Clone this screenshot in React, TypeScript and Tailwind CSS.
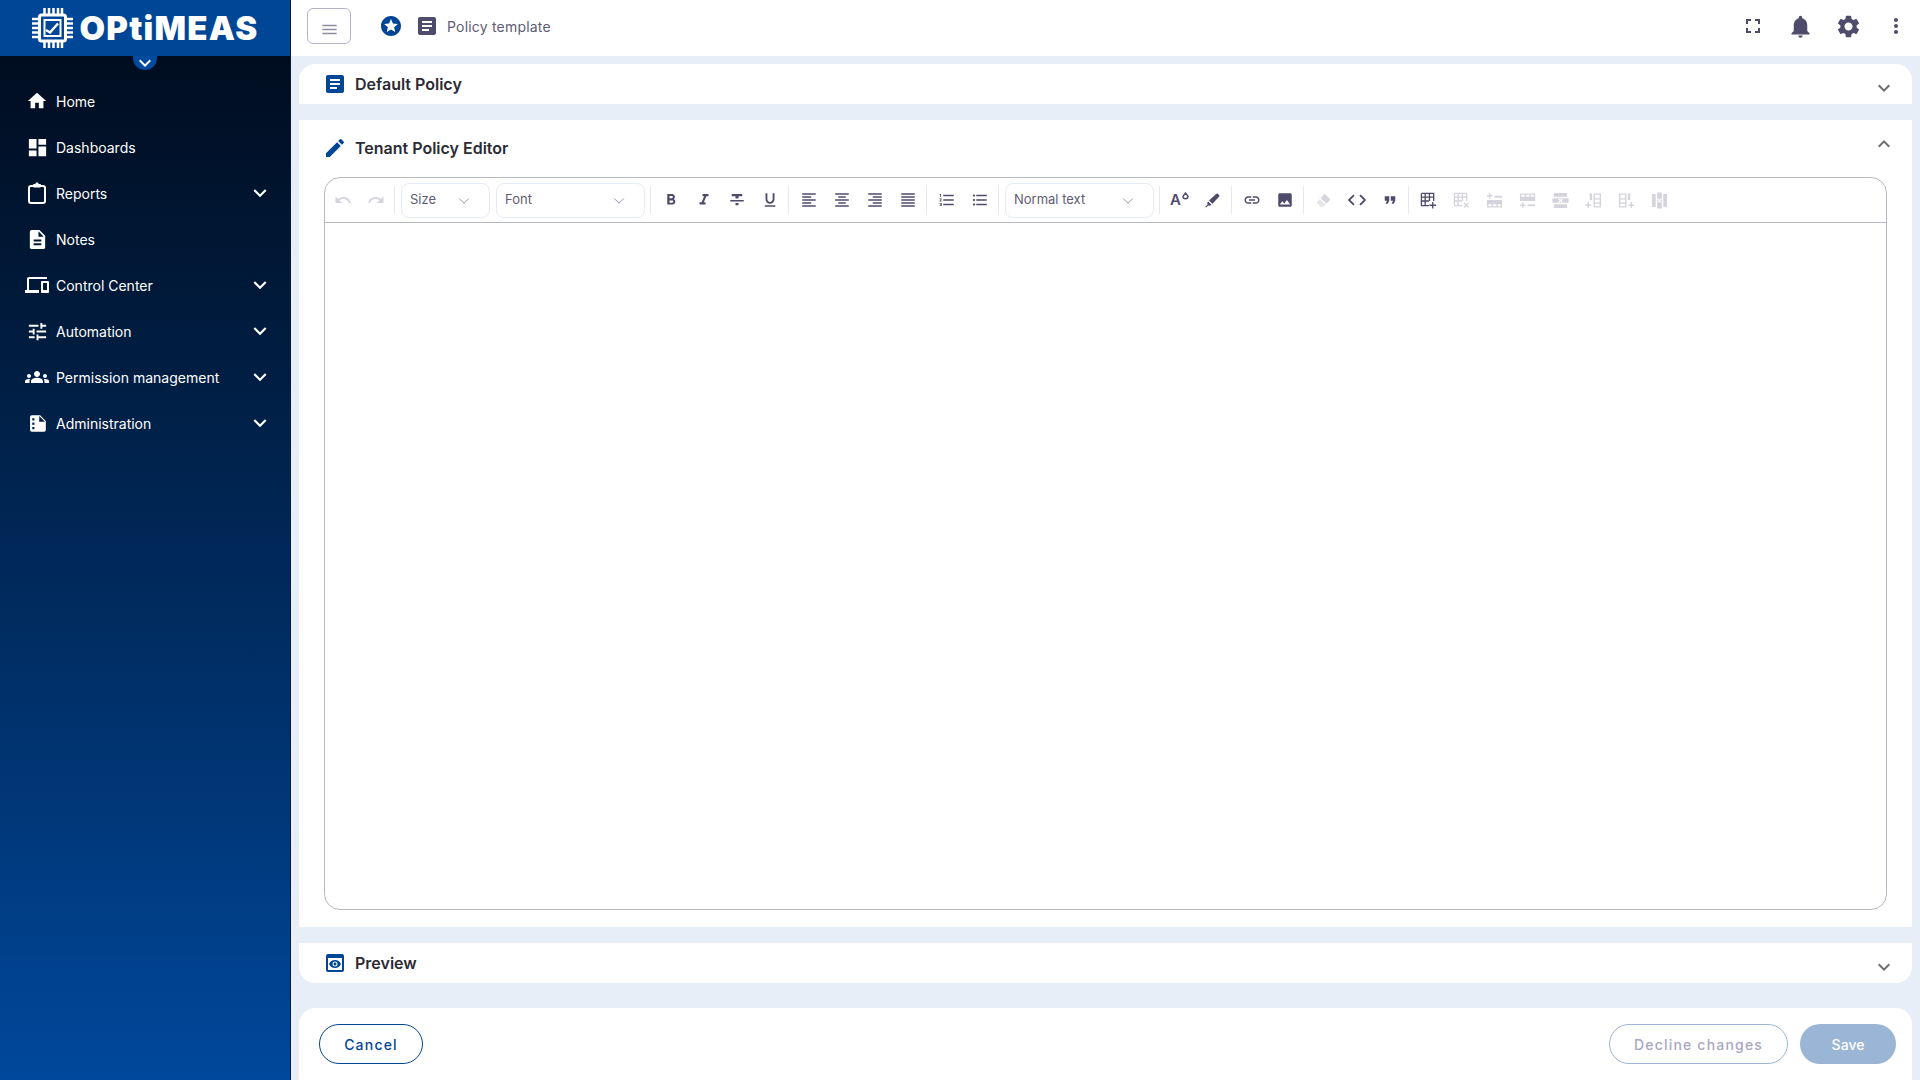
import {
  MdHome,
  MdDashboard,
  MdDescription,
  MdOutlineDevices,
  MdTune,
  MdGroups,
  MdKeyboardArrowDown,
  MdKeyboardArrowUp,
  MdMenu,
  MdStars,
  MdArticle,
  MdFullscreen,
  MdNotifications,
  MdSettings,
  MdMoreVert,
  MdEdit,
  MdPreview,
  MdUndo,
  MdRedo,
  MdFormatBold,
  MdFormatItalic,
  MdFormatStrikethrough,
  MdFormatUnderlined,
  MdFormatAlignLeft,
  MdFormatAlignCenter,
  MdFormatAlignRight,
  MdFormatAlignJustify,
  MdFormatListNumbered,
  MdFormatListBulleted,
  MdLink,
  MdImage,
  MdCode,
  MdFormatQuote,
} from 'react-icons/md';
import { ChevronDown } from 'lucide-react';
import type { ComponentType } from 'react';

type Icon = ComponentType<{ size?: number; className?: string }>;

const ReportsIcon: Icon = ({ size, className }) => (
  <svg width={size} height={size} viewBox="0 0 24 24" className={className} fill="none" stroke="currentColor">
    <rect x="4" y="4.5" width="16" height="17" rx="2" strokeWidth="2" />
    <path d="M8.5 5.5h7V3h-2.5V1.5h-2V3H8.5z" fill="currentColor" strokeWidth="1" />
  </svg>
);

const AdminIcon: Icon = ({ size, className }) => (
  <svg width={size} height={size} viewBox="0 0 24 24" className={className}>
    <path d="M5.5 2.5h9.5l6.5 6.5v10.500a2 2 0 01-2 2h-14a2 2 0 01-2-2v-15a2 2 0 012-2z" fill="currentColor" />
    <path d="M14 3.500v6.500h6.500z" fill="#001f45" />
    <rect x="6" y="6" width="2.500" height="2.500" fill="#001f45" />
    <rect x="6" y="11" width="2.500" height="2.500" fill="#001f45" />
    <rect x="6" y="16" width="2.500" height="2.500" fill="#001f45" />
  </svg>
);

const menu: { label: string; icon: Icon; size?: number; sub?: boolean }[] = [
  { label: 'Home', icon: MdHome, size: 22 },
  { label: 'Dashboards', icon: MdDashboard, size: 23 },
  { label: 'Reports', icon: ReportsIcon, size: 25, sub: true },
  { label: 'Notes', icon: MdDescription, size: 23 },
  { label: 'Control Center', icon: MdOutlineDevices, size: 24, sub: true },
  { label: 'Automation', icon: MdTune, size: 23, sub: true },
  { label: 'Permission management', icon: MdGroups, size: 24, sub: true },
  { label: 'Administration', icon: AdminIcon, size: 21, sub: true },
];

const Logo = () => (
  <div className="flex items-center gap-[7px] text-white">
    <svg width="41" height="40" viewBox="0 0 41 40" fill="none" stroke="white">
      <rect x="7.500" y="7" width="26" height="26" rx="2" strokeWidth="3" />
      <rect x="12.500" y="12" width="16" height="16" strokeWidth="2" />
      <path d="M14 22l4 2.500 8-9" strokeWidth="2.500" />
      <path
        d="M12.500 0v6M17 0v6M21.500 0v6M26 0v6M30 0v6M12.500 34v6M17 34v6M21.500 34v6M26 34v6M30 34v6M0 11h7M0 15.500h7M0 20h7M0 24.500h7M0 29h7M34 11h7M34 15.500h7M34 20h7M34 24.500h7M34 29h7"
        strokeWidth="2.500"
      />
    </svg>
    <span className="text-[33px] leading-none font-black tracking-[1.2px] font-['Inter',sans-serif]">OPtiMEAS</span>
  </div>
);

const Sidebar = () => (
  <aside className="w-[291px] shrink-0 h-[1080px] flex flex-col bg-gradient-to-b from-[#000a1a] to-[#00489c] border-r border-[#0a1a30]">
    <div className="relative h-14 bg-[#004696] flex items-center justify-center">
      <Logo />
      <div className="absolute top-14 left-[133px] w-6 h-[14px] rounded-b-full bg-[#004a9f]">
        <MdKeyboardArrowDown className="text-white -mt-[5px]" size={24} />
      </div>
    </div>
    <nav className="pt-[22px] flex flex-col">
      {menu.map((item) => (
        <div key={item.label} className="h-[46px] flex items-center text-white text-[14px] pl-[25px] pr-[17px]">
          <span className="w-6 flex justify-center shrink-0">
            <item.icon size={item.size} />
          </span>
          <span className="ml-[7px] flex-1">{item.label}</span>
          {item.sub && <MdKeyboardArrowDown size={26} />}
        </div>
      ))}
    </nav>
  </aside>
);

const TopBar = () => (
  <header className="h-14 bg-white flex items-center pb-1 pl-4 pr-3 text-[#4f4b6b]">
    <button className="w-11 h-9 rounded-md border border-[#b4b4c8] flex items-center justify-center text-[#8d8ba0]">
      <MdMenu size={19} className="mt-[6px]" />
    </button>
    <MdStars size={24} className="ml-7 text-[#004696]" />
    <MdArticle size={24} className="ml-3" />
    <span className="ml-2 text-[14px] tracking-[0.2px] text-[#5f5c75]">Policy template</span>
    <div className="ml-auto flex items-center">
      <MdFullscreen size={24} />
      <MdNotifications size={27} className="ml-[22px]" />
      <MdSettings size={27} className="ml-[21px]" />
      <MdMoreVert size={24} className="ml-[22px]" />
    </div>
  </header>
);

const Sep = () => <div className="w-px h-7 bg-[#e3e8f2] ml-[2px] mr-[3px]" />;

// table tool icons, all on an 18 box
const tableGrid = 'M1.500 1.500h13v8M1.500 1.500v13h8M1.500 5.500h13M1.500 9.500h8M5.500 1.500v13M10 1.500v8';

const TableAdd: Icon = ({ size }) => (
  <svg width={size} height={size} viewBox="0 0 18 18" fill="none" stroke="currentColor" strokeWidth="1.400">
    <path d={tableGrid} />
    <path d="M13.500 10.500v7M10 14h7" />
  </svg>
);

const TableDelete: Icon = ({ size }) => (
  <svg width={size} height={size} viewBox="0 0 18 18" fill="none" stroke="currentColor" strokeWidth="1.400">
    <path d={tableGrid} />
    <path d="M11.500 11.500l5 5M16.500 11.500l-5 5" />
  </svg>
);

const RowAbove: Icon = ({ size }) => (
  <svg width={size} height={size} viewBox="0 0 18 18" fill="currentColor">
    <path d="M4 1v6M1 4h6" stroke="currentColor" strokeWidth="1.500" />
    <path d="M9 4h8v2H9z" />
    <path d="M1 8.500h16v8H1zM2.500 13v2h3.500v-2zM7.500 13v2h3.500v-2zM12.500 13v2h3v-2z" fillRule="evenodd" />
  </svg>
);

const RowBelow: Icon = ({ size }) => (
  <svg width={size} height={size} viewBox="0 0 18 18" fill="currentColor">
    <path d="M1 1.500h16v8H1zM2.500 3v2h3.500v-2zM7.500 3v2h3.500v-2zM12.500 3v2h3v-2z" fillRule="evenodd" />
    <path d="M4 11v6M1 14h6" stroke="currentColor" strokeWidth="1.500" />
    <path d="M9 13h8v2H9z" />
  </svg>
);

const RowDelete: Icon = ({ size }) => (
  <svg width={size} height={size} viewBox="0 0 18 18" fill="currentColor">
    <path d="M2 1h14v4H2zM0.500 6.500h17v5h-17zM2 13h14v4H2z" />
    <path d="M7 7l4 4M11 7l-4 4" stroke="white" strokeWidth="1.200" />
  </svg>
);

const ColLeft: Icon = ({ size }) => (
  <svg width={size} height={size} viewBox="0 0 18 18" fill="currentColor">
    <path d="M9 1.500h8v15H9zM10.500 3v3.500h5V3zM10.500 8v3h5V8zM10.500 12.500V15h5v-2.500z" fillRule="evenodd" />
    <path d="M3.500 10.500v6.500M0.500 14h6" stroke="currentColor" strokeWidth="1.500" fill="none" />
    <path d="M5 1.500h2.500v7H5z" />
  </svg>
);

const ColRight: Icon = ({ size }) => (
  <svg width={size} height={size} viewBox="0 0 18 18" fill="currentColor">
    <path d="M1 1.500h8v15H1zM2.500 3v3.500h5V3zM2.500 8v3h5V8zM2.500 12.500V15h5v-2.500z" fillRule="evenodd" />
    <path d="M14 10.500v6.500M11 14h6" stroke="currentColor" strokeWidth="1.500" fill="none" />
    <path d="M10.500 1.500H13v7h-2.500z" />
  </svg>
);

const ColDelete: Icon = ({ size }) => (
  <svg width={size} height={size} viewBox="0 0 18 18" fill="currentColor">
    <path d="M1 2h4v14H1zM6.500 0.500h5v17h-5zM13 2h4v14h-4z" />
    <path d="M7 7l4 4M11 7l-4 4" stroke="white" strokeWidth="1.200" />
  </svg>
);

const Marker: Icon = ({ size }) => (
  <svg width={size} height={size} viewBox="0 0 24 24" fill="currentColor">
    <path d="M17.500 2.500a1.500 1.500 0 012 0l2 2a1.500 1.500 0 010 2l-9.500 10-5-4.500z" />
    <path d="M6 13.500l4.500 4.500-2 1.500-2.500-.5L3.500 21.500h-1.500v-1L5 18l-.5-2.500z" />
  </svg>
);

const Eraser: Icon = ({ size }) => (
  <svg width={size} height={size} viewBox="0 0 24 24" fill="currentColor">
    <path d="M14.500 3l6.500 6.500a1.500 1.500 0 010 2L16 16.500 8 8.500l5-5.500a1 1 0 011.500 0z" />
    <path d="M6.800 9.800l8 8-3 3H8l-5-5a1.500 1.500 0 010-2z" opacity="0.6" />
  </svg>
);

const ColorText = () => (
  <span className="w-[33px] flex justify-center items-start text-[#4f4b6b]">
    <span className="text-[15px] leading-[18px] font-semibold">A</span>
    <svg width="7" height="8" viewBox="0 0 7 8" fill="none" stroke="currentColor" strokeWidth="1.400" className="mt-[1px] ml-[1px]">
      <path d="M3.500 1L6 4.200a2.400 2.400 0 11-5 0z" />
    </svg>
  </span>
);

const Tool = ({ icon: I, off, size = 18 }: { icon: Icon; off?: boolean; size?: number }) => (
  <div className={`w-[33px] flex justify-center ${off ? 'text-[#d5d4dc]' : 'text-[#4f4b6b]'}`}>
    <I size={size} />
  </div>
);

const Select = ({ label, w }: { label: string; w: string }) => (
  <div className={`${w} h-[35px] mx-[3px] rounded-lg border border-[#e5ebf7] flex items-center justify-between pl-2 pr-[16px] text-[13px] text-[#5f5c75]`}>
    {label}
    <ChevronDown size={18} strokeWidth={1.200} className="mt-[2px] text-[#8d8ba0]" />
  </div>
);

const Toolbar = () => (
  <div className="h-[45px] border-b border-[#b8b8c2] flex items-center pl-[1px] shrink-0">
    <Tool icon={MdUndo} off />
    <Tool icon={MdRedo} off />
    <Sep />
    <Select label="Size" w="w-[89px]" />
    <Select label="Font" w="w-[149px]" />
    <Sep />
    <Tool icon={MdFormatBold} />
    <Tool icon={MdFormatItalic} />
    <Tool icon={MdFormatStrikethrough} />
    <Tool icon={MdFormatUnderlined} />
    <Sep />
    <Tool icon={MdFormatAlignLeft} />
    <Tool icon={MdFormatAlignCenter} />
    <Tool icon={MdFormatAlignRight} />
    <Tool icon={MdFormatAlignJustify} />
    <Sep />
    <Tool icon={MdFormatListNumbered} />
    <Tool icon={MdFormatListBulleted} />
    <Sep />
    <Select label="Normal text" w="w-[149px]" />
    <Sep />
    <ColorText />
    <Tool icon={Marker} size={17} />
    <Sep />
    <Tool icon={MdLink} />
    <Tool icon={MdImage} />
    <Sep />
    <Tool icon={Eraser} off size={17} />
    <Tool icon={MdCode} size={22} />
    <Tool icon={MdFormatQuote} />
    <Sep />
    <Tool icon={TableAdd} size={17} />
    <Tool icon={TableDelete} off size={17} />
    <Tool icon={RowAbove} off size={17} />
    <Tool icon={RowBelow} off size={17} />
    <Tool icon={RowDelete} off size={17} />
    <Tool icon={ColLeft} off size={17} />
    <Tool icon={ColRight} off size={17} />
    <Tool icon={ColDelete} off size={17} />
  </div>
);

const SectionHead = ({ icon: I, title, up }: { icon: Icon; title: string; up?: boolean }) => (
  <div className="h-10 flex items-center pl-6 pr-[16px] shrink-0">
    <I size={24} className="text-[#004696]" />
    <span className="ml-2 text-[16px] font-semibold text-[#2b2b33]">{title}</span>
    {up ? (
      <MdKeyboardArrowUp size={24} className="ml-auto mb-2 text-[#6f6f6f]" />
    ) : (
      <MdKeyboardArrowDown size={24} className="ml-auto mt-2 text-[#6f6f6f]" />
    )}
  </div>
);

export default function App() {
  return (
    <div className="flex h-[1080px] w-[1920px] overflow-hidden bg-[#e7eef8] font-['Inter',sans-serif]">
      <Sidebar />
      <main className="flex-1 flex flex-col min-w-0">
        <TopBar />
        <div className="flex flex-col pl-2 pr-2 pt-2 flex-1">
          <section className="bg-white rounded-t-2xl">
            <SectionHead icon={MdArticle} title="Default Policy" />
          </section>
          <section className="bg-white mt-4 h-[807px] flex flex-col">
            <div className="pt-2">
              <SectionHead icon={MdEdit} title="Tenant Policy Editor" up />
            </div>
            <div className="mx-[25px] mt-[9px] h-[733px] rounded-2xl border border-[#b8b8c2] flex flex-col">
              <Toolbar />
            </div>
          </section>
          <section className="bg-white mt-4 rounded-b-2xl">
            <SectionHead icon={MdPreview} title="Preview" />
          </section>
          <section className="bg-white mt-[25px] rounded-t-2xl h-[72px] flex items-center pl-[20px] pr-[16px]">
            <button className="w-[104px] h-10 rounded-full border border-[#004696] text-[#004696] text-[14px] font-medium tracking-[1.2px]">
              Cancel
            </button>
            <button className="ml-auto w-[179px] h-10 rounded-full border border-[#9ab5d6] text-[#a9a7c0] text-[14px] font-medium tracking-[1.2px]">
              Decline changes
            </button>
            <button className="ml-3 w-24 h-10 rounded-full bg-[#9ab5d6] text-white text-[14px] font-medium">
              Save
            </button>
          </section>
        </div>
      </main>
    </div>
  );
}
